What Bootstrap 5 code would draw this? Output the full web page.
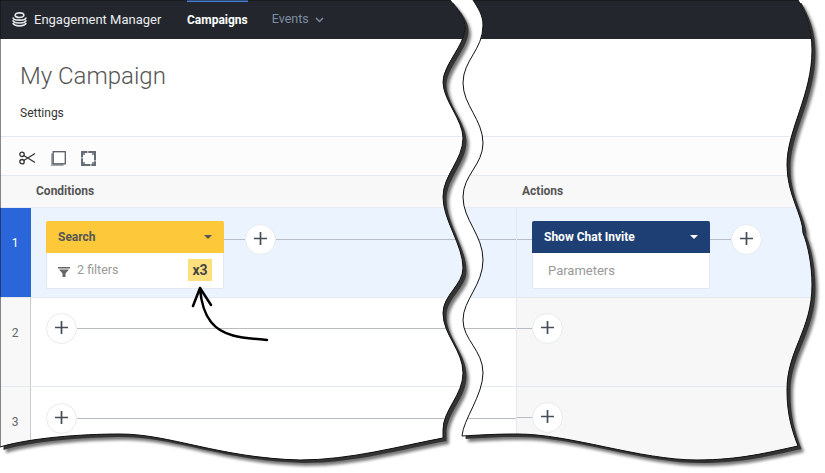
<!doctype html>
<html lang="en"><head><meta charset="utf-8"><title>Engagement Manager</title>
<link href="https://cdn.jsdelivr.net/npm/bootstrap@5.3.0/dist/css/bootstrap.min.css" rel="stylesheet">
<style>
html,body{height:473px;overflow:hidden;background:#fff}
body{font-family:Roboto,"Liberation Sans",sans-serif;position:relative;width:825px}
.em-nav{height:39px;background:#23272d;padding:0}
.em-brand{color:#e9ebee;font-size:13px;margin-left:12px;margin-right:25px;gap:7px;width:150px;flex:none;white-space:nowrap}
.em-brand svg{flex:none}
.em-link{font-size:12.5px;color:#7e8ca1;height:39px;display:flex;align-items:center;border-top:2px solid transparent;padding-bottom:2px}
.em-link.on{color:#fff;font-weight:700;font-size:12px;border-top-color:#4a7fd8;margin-right:24px}
.em-chev{margin-left:6px}
.em-head{height:98px;padding:23px 0 0 20px;border-bottom:1px solid #e4e8ef}
.em-title{font-size:24px;font-weight:300;color:#555;line-height:28px;margin:0 0 14px}
.em-settings{font-size:12px;color:#333;line-height:18px}
.em-tools{height:39px;background:#fcfcfc;border-bottom:1px solid #e4e8ef;padding:4px 0 0 19px;gap:15px}
.em-cols{height:32px;background:#f8f8f8;border-bottom:1px solid #e6eaf1;font-size:12px;font-weight:700;color:#555;padding-bottom:2px}
.em-gut{width:31px;flex:none;border-right:1px solid #c9cbce;background:#f8f8f8;color:#666;font-size:12px;display:flex;align-items:flex-start;justify-content:center;padding-top:26px;line-height:18px}
.em-cond{width:486px;flex:none;padding-left:15px;border-right:1px solid #e4e9f1}
.em-act{flex:1;padding-left:0;background:#f7f7f7}
.em-row{height:89px;border-bottom:1px solid #e4e8ef}
.em-row.sel{height:90px;background:#ebf3fe}
.sel .em-gut{background:#2a66d9;color:#fff;border-right-color:#2a66d9}
.sel .em-cond{padding-top:13px}
.sel .em-act{background:#ebf3fe;padding-top:13px}
.em-card{width:178px;height:68px;border:1px solid #e3e8f0;border-radius:2px;flex:none}
.em-cardhead{height:32px;padding:0 12px;font-size:12px;font-weight:700;border-radius:2px 2px 0 0;margin:-1px -1px 0}
.em-yellow{background:#fdc93b;color:#555}
.em-navy{background:#1e3f73;color:#fff}
.em-caret{width:0;height:0;border:4.500px solid transparent;border-top:4.500px solid currentColor;border-bottom:0}
.em-cardbody{padding:0 11px;height:36px;font-size:12.500px;color:#999}
.em-params{font-size:13px;padding-left:15px}
.em-count{background:#ffe07f;color:#444;font-weight:700;font-size:14px;width:24px;height:22px}
.em-wire{height:1px;background:#b8bcc3;margin-top:15px}
.em-wirebox{height:31px;margin-top:3px}
.em-wirebox .em-wire{margin-top:0}
.em-plus{width:31px;height:31px;flex:none;border-radius:50%;background:#fff;border:1px solid #e6eaf1;padding:0 0 2px;display:flex;align-items:center;justify-content:center}
.em-plus svg{display:block}
.em-w15{width:15px;flex:none}
.em-w21{width:21px;flex:none}
.em-grow{flex:1}
.em-pad15{padding-top:15px}
.em-pad16{padding-top:16px}
.em-last{border:0;height:86px}
.em-overlay{position:absolute;left:0;top:0;width:825px;height:473px;pointer-events:none}
</style></head>
<body>
<nav class="navbar em-nav flex-nowrap justify-content-start">
  <div class="d-flex align-items-center em-brand">
    <svg width="15" height="15" viewBox="0 0 15 15" fill="none" stroke="#e4e6e8" stroke-width="1.700"><ellipse cx="7.500" cy="3.200" rx="4.300" ry="2.300"/><path d="M1 5.400c0 1.600 2.900 2.700 6.500 2.700s6.500-1.100 6.500-2.700M1 8.300c0 1.600 2.900 2.700 6.500 2.700S14 9.900 14 8.300M1 11c0 1.500 2.900 2.800 6.500 2.800s6.500-1.300 6.500-2.800"/></svg>
    <span>Engagement Manager</span>
  </div>
  <a class="em-link on text-decoration-none" href="#">Campaigns</a>
  <a class="em-link text-decoration-none" href="#">Events
    <svg class="em-chev" width="9" height="6" viewBox="0 0 9 6" fill="none" stroke="#7e8ca1" stroke-width="1.500"><path d="M1 1l3.500 3.500L8 1"/></svg></a>
</nav>
<header class="em-head">
  <h1 class="em-title">My Campaign</h1>
  <div class="em-settings">Settings</div>
</header>
<div class="em-tools d-flex align-items-center">
  <svg width="17" height="14" viewBox="0 0 17 14" fill="none" stroke="#333" stroke-width="1.300"><circle cx="3" cy="3.300" r="2.200"/><circle cx="3" cy="10.700" r="2.200"/><path d="M4.800 4.500L16 11.500M4.800 9.500L16 2.500"/></svg>
  <svg width="15" height="15" viewBox="0 0 15 15" fill="none"><rect y="2.500" width="12.500" height="12.500" fill="#a3a7ad"/><rect x="2.200" y=".7" width="12.100" height="12.100" fill="#fff" stroke="#555c66" stroke-width="1.300"/></svg>
  <svg width="15" height="15" viewBox="0 0 15 15" fill="none"><rect width="15" height="15" fill="#666c75"/><rect x="2" y="2" width="11" height="11" fill="#fff"/><path d="M2 2h2v2H2zM11 2h2v2h-2zM2 11h2v2H2zM11 11h2v2h-2z" fill="#8b9098"/><path d="M6 0h1.500v2H6zM9 13h1.500v2H9zM0 6h2v1.500H0zM13 9h2v1.500h-2z" fill="#fff" opacity=".5"/></svg>
</div>
<div class="em-cols d-flex align-items-center">
  <div style="width:522px;padding-left:36px">Conditions</div>
  <div>Actions</div>
</div>
<div class="em-row sel d-flex">
  <div class="em-gut">1</div>
  <div class="em-cond d-flex">
    <div class="card em-card">
      <div class="em-cardhead em-yellow d-flex align-items-center justify-content-between">Search<span class="em-caret"></span></div>
      <div class="em-cardbody d-flex align-items-center justify-content-between">
        <span class="d-flex align-items-center" style="gap:7px"><svg width="12" height="10" viewBox="0 0 12 10" fill="#666" style="margin-top:3px"><path d="M0 0h12v1.500H0zM1 2.500h10L7.500 6.500v3.500h-3V6.500z"/></svg>2 filters</span>
        <span class="em-count d-flex align-items-center justify-content-center">x3</span>
      </div>
    </div>
    <div class="d-flex align-items-center em-grow em-wirebox">
      <span class="em-wire em-w21"></span>
      <button class="em-plus" type="button" aria-label="Add"><svg width="13" height="13" viewBox="0 0 13 13" stroke="#444c58" stroke-width="1.700"><path d="M6.500 0v13M0 6.500h13"/></svg></button>
      <span class="em-wire em-grow"></span>
    </div>
  </div>
  <div class="em-act d-flex">
    <div class="d-flex align-items-center em-wirebox"><span class="em-wire em-w15"></span></div>
    <div class="card em-card">
      <div class="em-cardhead em-navy d-flex align-items-center justify-content-between">Show Chat Invite<span class="em-caret"></span></div>
      <div class="em-cardbody em-params d-flex align-items-center">Parameters</div>
    </div>
    <div class="d-flex align-items-center em-wirebox">
      <span class="em-wire em-w21"></span>
      <button class="em-plus" type="button" aria-label="Add"><svg width="13" height="13" viewBox="0 0 13 13" stroke="#444c58" stroke-width="1.700"><path d="M6.500 0v13M0 6.500h13"/></svg></button>
    </div>
  </div>
</div>
<div class="em-row d-flex">
  <div class="em-gut">2</div>
  <div class="em-cond d-flex align-items-start em-pad15">
    <button class="em-plus" type="button" aria-label="Add"><svg width="13" height="13" viewBox="0 0 13 13" stroke="#444c58" stroke-width="1.700"><path d="M6.500 0v13M0 6.500h13"/></svg></button>
    <span class="em-wire em-grow"></span>
  </div>
  <div class="em-act d-flex align-items-start em-pad15">
    <span class="em-wire em-w15"></span>
    <button class="em-plus" type="button" aria-label="Add"><svg width="13" height="13" viewBox="0 0 13 13" stroke="#444c58" stroke-width="1.700"><path d="M6.500 0v13M0 6.500h13"/></svg></button>
  </div>
</div>
<div class="em-row em-last d-flex">
  <div class="em-gut">3</div>
  <div class="em-cond d-flex align-items-start em-pad16">
    <button class="em-plus" type="button" aria-label="Add"><svg width="13" height="13" viewBox="0 0 13 13" stroke="#444c58" stroke-width="1.700"><path d="M6.500 0v13M0 6.500h13"/></svg></button>
    <span class="em-wire em-grow"></span>
  </div>
  <div class="em-act d-flex align-items-start em-pad15">
    <span class="em-wire em-w15"></span>
    <button class="em-plus" type="button" aria-label="Add"><svg width="13" height="13" viewBox="0 0 13 13" stroke="#444c58" stroke-width="1.700"><path d="M6.500 0v13M0 6.500h13"/></svg></button>
  </div>
</div>

<svg class="em-overlay" viewBox="0 0 825 473" aria-hidden="true">
  <defs>
    <path id="pl" d="M0 0H450C458 10 465 18 465 28C465 45 443 65 443 82C443 100 463 120 463 138C463 160 443 175 443 197C443 220 463 245 463 268C463 285 443 295 443 313C443 335 463 350 463 373C463 395 443 410 443 430V438C400 446 350 460 300 460C220 458 170 434 120 434C80 434 30 438 0 447Z"/>
    <path id="pr" d="M473 0H798C806 14 812 28 812 50C812 95 787 130 787 165C787 195 803 215 803 233C808 245 812 265 812 285C812 330 787 350 787 390C787 415 792 430 798 446C770 452 740 460 697 460C640 460 570 434 517 434C495 434 480 435 462 436C463 420 483 395 483 373C483 350 463 340 463 320C463 300 483 285 483 260C483 235 463 220 463 197C463 175 483 165 483 143C483 120 463 105 463 83C463 60 483 50 483 25C483 15 478 8 473 0Z"/>
    <path id="po" clip-rule="evenodd" fill-rule="evenodd" d="M-5-5H830V478H-5ZM0 0H450C458 10 465 18 465 28C465 45 443 65 443 82C443 100 463 120 463 138C463 160 443 175 443 197C443 220 463 245 463 268C463 285 443 295 443 313C443 335 463 350 463 373C463 395 443 410 443 430V438C400 446 350 460 300 460C220 458 170 434 120 434C80 434 30 438 0 447ZM473 0H798C806 14 812 28 812 50C812 95 787 130 787 165C787 195 803 215 803 233C808 245 812 265 812 285C812 330 787 350 787 390C787 415 792 430 798 446C770 452 740 460 697 460C640 460 570 434 517 434C495 434 480 435 462 436C463 420 483 395 483 373C483 350 463 340 463 320C463 300 483 285 483 260C483 235 463 220 463 197C463 175 483 165 483 143C483 120 463 105 463 83C463 60 483 50 483 25C483 15 478 8 473 0Z"/>
    <clipPath id="outside"><use href="#po"/></clipPath>
    <filter id="soft" x="-10%" y="-10%" width="120%" height="120%"><feGaussianBlur stdDeviation="1.500"/></filter>
  </defs>
  <use href="#po" fill="#fff"/>
  <g clip-path="url(#outside)">
    <g filter="url(#soft)" fill="#777"><use href="#pl" x="6" y="6"/><use href="#pr" x="6" y="6"/></g>
    <g fill="#333"><use href="#pl" x="3.500" y="3"/><use href="#pr" x="3.500" y="3"/></g>
  </g>
  <g fill="none" stroke="#111" stroke-width="1"><use href="#pl"/><use href="#pr"/></g>
  <path d="M267 340C240 338 222 336 211 322C203 312 201 300 200 289M193 306L200 288L211 305" fill="none" stroke="#000" stroke-width="2.500" stroke-linecap="round" stroke-linejoin="round"/>
</svg>
<script src="https://cdn.jsdelivr.net/npm/bootstrap@5.3.0/dist/js/bootstrap.bundle.min.js"></script>
</body></html>
